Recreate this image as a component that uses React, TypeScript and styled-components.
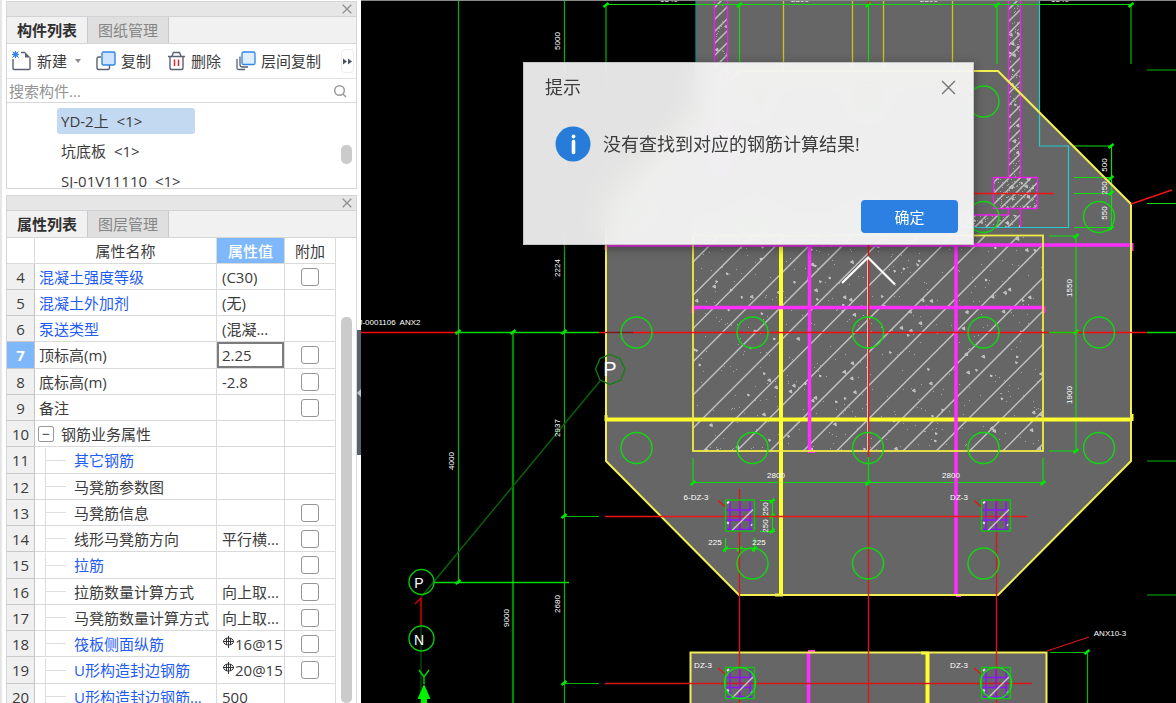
import React from "react";
import styled, { createGlobalStyle, css } from "styled-components";

const GlobalStyle = createGlobalStyle`
  *, *::before, *::after { box-sizing: border-box; }
  body {
    margin: 0;
    background: #fff;
    color: #3c3c3c;
    font: 15px/20px "Open Sans", "Noto Sans CJK SC", sans-serif;
  }
  button, input { font: inherit; color: inherit; }
  button { padding: 0; border: 0; background: none; cursor: pointer; }
`;

/* ---------- shell ---------- */

const Shell = styled.div`
  display: flex;
  height: 100vh;
  overflow: hidden;
`;

const Sidebar = styled.aside`
  flex: none;
  width: 357px;
  display: flex;
  flex-direction: column;
  gap: 6px;
  padding: 1px 0 0 4px;
  border-left: 2px solid #e6e6e6;
`;

const Panel = styled.section<{ $grow?: boolean }>`
  display: flex;
  flex-direction: column;
  border: 1px solid #d4d6d8;
  overflow: hidden;
  ${(p) => p.$grow && css`flex: 1; min-height: 0; border-bottom: 0;`}
`;

const PanelBar = styled.div`
  display: flex;
  flex: none;
  justify-content: flex-end;
  align-items: center;
  height: 14px;
  padding-right: 4px;
  background: #e6e6e6;
`;

const BarClose = styled.button`
  display: flex;
  color: #8f8f8f;
`;

const Tabs = styled.div`
  display: flex;
  flex: none;
  height: 28px;
  background: #f1f1f1;
  border-top: 1px solid #d0d3d6;
  border-bottom: 1px solid #d4d6d8;
`;

const Tab = styled.button<{ $active?: boolean }>`
  width: 81px;
  border-right: 1px solid #c6cace;
  background: ${(p) => (p.$active ? "#f1f1f1" : "#dfdfdf")};
  color: ${(p) => (p.$active ? "#303030" : "#868686")};
  font-weight: ${(p) => (p.$active ? 700 : 400)};
`;

/* ---------- component list ---------- */

const Toolbar = styled.div`
  display: flex;
  align-items: center;
  gap: 15px;
  height: 35px;
  padding: 0 2px 0 5px;
  border-bottom: 1px solid #e2e2e2;
`;

const ToolButton = styled.button`
  display: flex;
  align-items: center;
  gap: 5px;
  white-space: nowrap;
`;

const Caret = styled.span`
  margin-left: 3px;
  border: 3px solid transparent;
  border-top: 4px solid #8c8c8c;
  border-bottom: 0;
`;

const MoreButton = styled.button`
  display: flex;
  align-items: center;
  justify-content: center;
  width: 13px;
  height: 24px;
  margin-left: auto;
  border: 1px solid #ececec;
  border-radius: 4px;
`;

const SearchBox = styled.label`
  display: flex;
  align-items: center;
  height: 24px;
  padding: 0 9px 0 2px;
  border-bottom: 1px solid #d8d8d8;
  color: #9a9a9a;
`;

const SearchInput = styled.input`
  flex: 1;
  min-width: 0;
  height: 22px;
  padding: 0;
  border: 0;
  outline: 0;
  background: none;
  &::placeholder { color: #949494; }
`;

const ListArea = styled.div`
  display: flex;
  justify-content: space-between;
  height: 85px;
  overflow: hidden;
`;

const ItemList = styled.ul`
  display: flex;
  flex-direction: column;
  gap: 4px;
  margin: 0;
  padding: 5px 0 0 50px;
  list-style: none;
`;

const Item = styled.li<{ $selected?: boolean }>`
  min-width: 138px;
  height: 26px;
  padding: 0 4px;
  line-height: 26px;
  border-radius: 3px;
  background: ${(p) => (p.$selected ? "#c3d9f1" : "transparent")};
`;

const Count = styled.span`
  margin-left: 4px;
`;

const Rail = styled.div<{ $top: number }>`
  display: flex;
  flex-direction: column;
  width: 15px;
  padding: ${(p) => p.$top}px 4px 0 0;
`;

const Thumb = styled.div<{ $length?: number }>`
  flex: ${(p) => (p.$length ? `0 0 ${p.$length}px` : "1")};
  border-radius: 5px;
  background: #cbcbcb;
`;

/* ---------- property table ---------- */

const TableArea = styled.div`
  display: flex;
  justify-content: space-between;
  flex: 1;
  min-height: 0;
`;

const TableClip = styled.div`
  overflow: hidden;
`;

const Table = styled.table`
  width: 329px;
  table-layout: fixed;
  border-collapse: separate;
  border-spacing: 0;

  tbody tr { height: 26px; }
  tbody tr:nth-child(4n) { height: 27px; }
`;

const HeadCell = styled.th<{ $current?: boolean }>`
  height: 26px;
  padding: 0;
  font-weight: 400;
  border-right: 1px solid #dadada;
  border-bottom: 1px solid #dadada;
  ${(p) => p.$current && css`background: #7fb8fa; color: #fff; font-weight: 500;`}
`;

const IndexCell = styled.th<{ $current?: boolean }>`
  padding: 0;
  font-weight: 400;
  background: #f0f0f0;
  border-right: 1px solid #c4c4c4;
  border-bottom: 1px solid #c8c8c8;
  ${(p) => p.$current && css`background: #7fb8fa; color: #fff; font-weight: 700;`}
`;

const Cell = styled.td`
  padding: 0;
  border-right: 1px solid #dadada;
  border-bottom: 1px solid #dadada;
`;

const NameBox = styled.div<{ $link?: boolean }>`
  display: flex;
  align-items: center;
  height: 25px;
  padding-left: 4px;
  overflow: hidden;
  white-space: nowrap;
  color: ${(p) => (p.$link ? "#1f5cf5" : "inherit")};
`;

const Branch = styled.span`
  flex: none;
  width: 21px;
  height: 26px;
  margin: 0 8px 0 6px;
  border-left: 1px solid #dedede;
  background: linear-gradient(#dedede, #dedede) 0 50% / 100% 1px no-repeat;
`;

const Fold = styled.button`
  flex: none;
  width: 16px;
  height: 16px;
  margin: 0 7px 0 -1px;
  border: 1px solid #9a9a9a;
  border-radius: 2px;
  font-size: 14px;
  line-height: 12px;
`;

const ValueBox = styled.div`
  display: flex;
  align-items: center;
  height: 25px;
  padding-left: 5px;
  overflow: hidden;
  white-space: nowrap;
`;

const ValueInput = styled.input`
  display: block;
  width: 100%;
  height: 26px;
  padding: 0 3px;
  border: 2px solid #7c7c7c;
  outline: 0;
`;

const Check = styled.input`
  appearance: none;
  display: block;
  width: 18px;
  height: 18px;
  margin: 0 auto;
  border: 1px solid #959595;
  border-radius: 3px;
  background: #fff;
`;

/* ---------- splitter and drawing area ---------- */

const Splitter = styled.div`
  flex: none;
  width: 4px;
  padding-top: 330px;
`;

const SplitHandle = styled.button`
  display: flex;
  align-items: center;
  width: 4px;
  height: 125px;
  background: #56616d;
`;

const Viewport = styled.main`
  position: relative;
  flex: 1;
  min-width: 0;
  background: #000;
`;

const Drawing = styled.svg`
  display: block;
  width: 100%;
  height: 100%;
  text {
    font-family: "Liberation Sans", sans-serif;
    font-size: 8px;
    fill: #fff;
    text-anchor: middle;
  }
`;

const Dialog = styled.div`
  position: absolute;
  top: 62px;
  left: 162px;
  width: 451px;
  height: 183px;
  display: flex;
  flex-direction: column;
  justify-content: space-between;
  padding: 12px 15px 11px 21px;
  border: 1px solid #c6c6c6;
  background: rgba(255, 255, 255, 0.89);
  backdrop-filter: blur(14px);
  box-shadow: 0 3px 10px rgba(0, 0, 0, 0.4);
  font-size: 18px;
  line-height: 24px;
`;

const DialogHead = styled.header`
  display: flex;
  justify-content: space-between;
  align-items: center;
`;

const DialogTitle = styled.h2`
  margin: 0;
  font-size: 18px;
  font-weight: 400;
`;

const DialogClose = styled.button`
  display: flex;
  padding: 0 2px;
`;

const DialogBody = styled.div`
  display: flex;
  align-items: center;
  gap: 12px;
  padding-left: 10px;
  margin-bottom: 12px;
`;

const Message = styled.p`
  margin: 0;
`;

const DialogFoot = styled.footer`
  display: flex;
  justify-content: flex-end;
`;

const Confirm = styled.button`
  width: 97px;
  height: 33px;
  border-radius: 4px;
  background: #2b80e2;
  color: #fff;
  font-size: 15px;
`;

/* ---------- icons ---------- */

const CrossIcon = ({ size, color }: { size: number; color: string }) => (
  <svg width={size} height={size} viewBox="0 0 14 14" stroke={color} strokeWidth={size > 12 ? 1.3 : 1.8} fill="none">
    <path d="M1 1 13 13M13 1 1 13" />
  </svg>
);

const NewIcon = () => (
  <svg width="20" height="20" viewBox="0 0 20 20" fill="none">
    <path d="M1 8v9.500q0 1 1 1h15q1 0 1-1V6.500M9 1.500h4" stroke="#5a6170" strokeWidth="1.400" />
    <path d="M13 1v5.500h5.500z" fill="#5a6170" />
    <rect x="1" y="1" width="5" height="5" fill="#7db4f5" />
    <path d="M3.500 0v7M0 3.500h7M.5 .5l6 6M6.500 .5l-6 6" stroke="#2f86ea" strokeWidth="1" />
  </svg>
);

const CopyIcon = () => (
  <svg width="20" height="20" viewBox="0 0 20 20" fill="none" strokeWidth="1.400">
    <path d="M5 6H2.500Q1 6 1 7.500V17q0 1.500 1.500 1.500H12q1.500 0 1.500-1.500v-3" stroke="#5a6170" />
    <rect x="6" y="1" width="13" height="13" rx="1.500" fill="#cfe3fc" stroke="#2f86ea" />
  </svg>
);

const DeleteIcon = () => (
  <svg width="20" height="20" viewBox="0 0 20 20" fill="none" strokeWidth="1.400">
    <path d="M2 5.500h17M4 5.500v11.500q0 1.500 1.500 1.500h10Q17 18.500 17 17V5.500M6 5l1.500-3.500h6L15 5" stroke="#5a6170" />
    <path d="M8.500 8.500v6.500M12.500 8.500v6.500" stroke="#e0222c" strokeWidth="1.500" />
  </svg>
);

const LayerCopyIcon = () => (
  <svg width="20" height="20" viewBox="0 0 20 20" fill="none" strokeWidth="1.300">
    <path d="M1 8v9q0 1.500 1.500 1.500H9M4 5.500v8q0 2.500 2.500 2.500H12" stroke="#5a6170" />
    <rect x="6" y="1" width="13" height="12.500" rx="1.500" fill="#dfedfd" stroke="#2f86ea" />
  </svg>
);

const SearchIcon = () => (
  <svg width="14" height="14" viewBox="0 0 14 14" fill="none" stroke="#9a9a9a" strokeWidth="1.500">
    <circle cx="6.500" cy="6.500" r="4.800" />
    <path d="m10 10 3 3" />
  </svg>
);

const RebarIcon = () => (
  <svg width="13" height="16" viewBox="0 0 13 16" fill="none" stroke="#333" strokeWidth="1">
    <ellipse cx="6.500" cy="5.500" rx="5" ry="3.500" />
    <path d="M6.500 0v12M1 5.500h11M4.500 2v7M8.500 2v7" />
  </svg>
);

const InfoIcon = () => (
  <svg width="36" height="36" viewBox="0 0 36 36">
    <circle cx="18" cy="18" r="17.500" fill="#267cd8" />
    <circle cx="18.500" cy="10.500" r="1.900" fill="#fff" />
    <path d="M18.500 15.500v11" stroke="#fff" strokeWidth="3.600" strokeLinecap="round" />
  </svg>
);

/* ---------- property data ---------- */

interface Property {
  no: number;
  name: string;
  value?: string;
  link?: boolean;
  check?: boolean;
  child?: boolean;
  group?: boolean;
  rebar?: boolean;
  current?: boolean;
}

const properties: Property[] = [
  { no: 4, name: "混凝土强度等级", value: "(C30)", link: true, check: true },
  { no: 5, name: "混凝土外加剂", value: "(无)", link: true },
  { no: 6, name: "泵送类型", value: "(混凝...", link: true },
  { no: 7, name: "顶标高(m)", value: "2.25", check: true, current: true },
  { no: 8, name: "底标高(m)", value: "-2.8", check: true },
  { no: 9, name: "备注", check: true },
  { no: 10, name: "钢筋业务属性", group: true },
  { no: 11, name: "其它钢筋", link: true, child: true },
  { no: 12, name: "马凳筋参数图", child: true },
  { no: 13, name: "马凳筋信息", child: true, check: true },
  { no: 14, name: "线形马凳筋方向", value: "平行横...", child: true, check: true },
  { no: 15, name: "拉筋", link: true, child: true, check: true },
  { no: 16, name: "拉筋数量计算方式", value: "向上取...", child: true, check: true },
  { no: 17, name: "马凳筋数量计算方式", value: "向上取...", child: true, check: true },
  { no: 18, name: "筏板侧面纵筋", value: "16@15", link: true, child: true, check: true, rebar: true },
  { no: 19, name: "U形构造封边钢筋", value: "20@15", link: true, child: true, check: true, rebar: true },
  { no: 20, name: "U形构造封边钢筋...", value: "500", link: true, child: true },
];

/* ---------- drawing ---------- */

type Seg = [number, number, number, number];

const Lines = ({ segs, color, w = 1 }: { segs: Seg[]; color: string; w?: number }) => (
  <path d={segs.map(([a, b, c, d]) => `M${a} ${b}L${c} ${d}`).join("")} stroke={color} strokeWidth={w} fill="none" />
);

function scatter(seed: number, count: number, x: number, y: number, w: number, h: number) {
  let s = seed;
  const next = () => {
    s = (s * 16807) % 2147483647;
    return s / 2147483647;
  };
  return Array.from({ length: count }, () => [x + next() * w, y + next() * h, next()] as const);
}

interface ConcreteProps {
  id: string;
  x: number;
  y: number;
  w: number;
  h: number;
  step: number;
  start: number;
  dots: number;
  stones: number;
}

const Concrete = ({ id, x, y, w, h, step, start, dots, stones }: ConcreteProps) => {
  const segs: Seg[] = [];
  for (let c = start; c < x + y + w + h; c += step) segs.push([c - y - h, y + h, c - y, y]);
  return (
    <g>
      <clipPath id={id}>
        <rect x={x} y={y} width={w} height={h} />
      </clipPath>
      <g clipPath={`url(#${id})`}>
        <Lines segs={segs} color="#c0c0c0" w={1.5} />
        {scatter(x * 7 + 11, dots, x, y, w, h).map(([a, b], i) => (
          <rect key={i} x={Math.round(a)} y={Math.round(b)} width="1" height="1" fill="#a8a8a8" />
        ))}
        {scatter(x * 3 + 77, stones, x, y, w, h).map(([a, b, r], i) => (
          <path
            key={i}
            d={r > 0.5 ? `M${a} ${b}l2.500 -1.500l.5 3z` : `M${a} ${b}l2 1l-1.500 1z`}
            fill="#aaa"
            stroke="#cacaca"
            strokeWidth="1"
            strokeLinejoin="round"
          />
        ))}
      </g>
    </g>
  );
};

const Note = ({ x, y, t, turn }: { x: number; y: number; t: string; turn?: boolean }) => (
  <text transform={turn ? `translate(${x + 3} ${y}) rotate(-90)` : `translate(${x} ${y + 3})`}>{t}</text>
);

const Column = ({ x, y, ring }: { x: number; y: number; ring?: boolean }) => (
  <g transform={`translate(${x} ${y})`} fill="none">
    <path d="M-9 -14V15M1 -14V15M11 -14V15M-13 -5.500H13M-13 4.500H13M-12 14H13" stroke="#8a14ff" strokeWidth="1.600" />
    <path d="M-7 15 14 -6" stroke="#c8c8c8" strokeWidth="1.400" />
    <path d="M-12 -12l2 -2M-12 7l2 1M12 9l1 1" stroke="#ddd" strokeWidth="2" />
    <rect x="-13.500" y="-15.500" width="29" height="31" stroke="#12c412" strokeWidth="1.400" />
    {ring && <circle cx="1" r="15.500" stroke="#12e012" strokeWidth="1.400" />}
    <path d="M-21 -15l7 6" stroke="#e01818" strokeWidth="1.400" />
  </g>
);

const piles: [number, number][] = [
  [752.5, 101.5], [868, 101.5], [983.5, 101.5],
  [636.5, 217], [752.5, 217], [868, 217], [983.5, 217], [1099, 217],
  [636.5, 332.5], [752.5, 332.5], [868, 332.5], [983.5, 332.5], [1099, 332.5],
  [636.5, 448], [752.5, 448], [868, 448], [983.5, 448], [1099, 448],
  [752.5, 563.5], [868, 563.5], [983.5, 563.5],
];

const ticks: [number, number][] = [
  [606, 5], [739.5, 5], [868, 5], [997, 5], [1131, 5],
  [458, 332], [513, 332], [564, 332], [458, 582], [564, 516], [564, 683],
  [693, 483], [868, 483], [1043, 483],
  [1111, 146], [1111, 178], [1111, 193], [1111, 228],
  [1076, 236], [1076, 332], [1076, 451],
  [772, 501], [772, 516], [772, 531], [725.5, 549], [739.5, 549], [754.5, 549],
  [1087, 652],
];

const slab = "739,71 998,71 1131,204 1131,461 998,595 739,595 606,461 606,204";

const FoundationPlan = () => (
  <Drawing viewBox="361 0 815 703" preserveAspectRatio="xMidYMid slice" role="img" aria-label="筏板平面图">
    <polygon points={slab} fill="#666" />
    <path d="M696 0H1040V120H696z" fill="#666" />
    <rect x="690" y="652" width="357" height="51" fill="#666" />

    <Concrete id="pit" x={693} y={236} w={350} h={215} step={33.25} start={955} dots={420} stones={120} />
    <Concrete id="wallL" x={715} y={0} w={12} h={180} step={12} start={722} dots={70} stones={8} />
    <Concrete id="wallR" x={1009} y={0} w={11} h={177} step={12} start={1018} dots={110} stones={12} />
    <Concrete id="post" x={993} y={178} w={44} h={31} step={11} start={1176} dots={110} stones={10} />
    <Concrete id="foot" x={960} y={215} w={60} h={12} step={11} start={1180} dots={50} stones={8} />

    <Lines color="#ccc41c" w={1.3} segs={[[783.5, 0, 783.5, 71], [852.5, 0, 852.5, 71], [883.5, 0, 883.5, 71], [952.5, 0, 952.5, 71]]} />
    <Lines color="#f01cf0" w={1.4} segs={[
      [714.5, 0, 714.5, 200], [727.5, 0, 727.5, 200], [1008.5, 0, 1008.5, 177], [1020.5, 0, 1020.5, 177],
      [1020.5, 209, 1020.5, 227], [940, 215, 1008.5, 215], [1008.5, 209, 1008.5, 215],
    ]} />
    <rect x="993.500" y="177.500" width="44" height="31" fill="none" stroke="#f01cf0" strokeWidth="1.400" />
    <path d="M1039.500 0V146H1068.500V227.500H700" fill="none" stroke="#22ccd0" strokeWidth="1.200" />
    <Lines color="#0a8f92" w={1.3} segs={[[696, 0, 696, 227]]} />

    {/* dimension chains */}
    <Lines color="#00b800" w={1.2} segs={[
      [458.5, 0, 458.5, 584], [564.5, 0, 564.5, 703], [606, 4, 606, 200],
      [1131, 4, 1131, 64], [1147, 70, 1176, 70], [1147, 461, 1176, 461], [1147, 595, 1176, 595],
      [1087.5, 650, 1087.5, 703], [1050, 652.5, 1088, 652.5],
      [564, 516.5, 599, 516.5], [564, 683.5, 599, 683.5],
    ]} />
    <Lines color="#008a00" w={2.2} segs={[[513, 332, 513, 703]]} />
    <Lines color="#10dc10" w={1.2} segs={[
      [605, 4.5, 1131, 4.5], [739.5, 4, 739.5, 64], [868.5, 4, 868.5, 64], [997, 4, 997, 64],
      [1147, 203.5, 1176, 203.5],
      [1111.5, 145, 1111.5, 230], [1074, 146, 1112, 146], [1074, 177.5, 1112, 177.5], [1074, 193.5, 1112, 193.5], [1074, 227.5, 1112, 227.5],
      [1076, 235, 1076, 451], [1049, 236, 1078, 236], [1049, 451, 1078, 451],
      [692, 482.5, 1043, 482.5], [693, 458, 693, 484], [1043, 458, 1043, 484],
      [772.5, 500, 772.5, 533], [760, 500.5, 775, 500.5], [760, 516, 775, 516], [760, 531.5, 775, 531.5],
      [724, 548.5, 755, 548.5], [725.5, 538, 725.5, 552], [739.5, 538, 739.5, 552], [754.5, 538, 754.5, 552],
    ]} />
    <path d={ticks.map(([x, y]) => `M${x - 2.5} ${y + 2}L${x + 2.5} ${y - 2}`).join("")} stroke="#00e800" strokeWidth="2.500" />

    {/* reinforcement bands */}
    <Lines color="#ffff2e" w={4} segs={[[781, 245, 781, 596], [606, 419.5, 1131, 419.5], [927.5, 652, 927.5, 703]]} />
    <path d="M606 415V421M1132 414V421M775 595H783M921 653H929" stroke="#ffff2e" strokeWidth="3" fill="none" />
    <Lines color="#ff2eff" w={3.5} segs={[
      [809.5, 245, 809.5, 451], [956, 235, 956, 595], [606, 245, 1131, 245], [693, 307.5, 1043, 307.5], [808.5, 652, 808.5, 703],
    ]} />
    <path d="M1132 243V251M1044 306V313M693 306V313M808 451.500H815M956 595.500H961M808 651.500H815M606 244V250" stroke="#ff2edc" strokeWidth="3" fill="none" />

    <polygon points={slab} fill="none" stroke="#f4ef50" strokeWidth="2" />
    <rect x="693" y="235.500" width="350" height="215.500" fill="none" stroke="#f1ec44" strokeWidth="1.800" />
    <path d="M690.500 703V652.500H1046.500V703" fill="none" stroke="#f4ef50" strokeWidth="2" />

    {/* axes */}
    <Lines color="#fb0808" w={1.4} segs={[
      [361, 332.5, 458, 332.5], [599, 332.5, 606, 332.5], [632, 332.5, 1147, 332.5],
    ]} />
    <Lines color="#8c1212" w={1.4} segs={[[606, 332.5, 633, 332.5]]} />
    <Lines color="#e8e8e8" w={1} segs={[[867.5, 257, 867.5, 451]]} />
    <Lines color="#f01414" w={1.4} segs={[
      [868.5, 0, 868.5, 4], [868.5, 245, 868.5, 457], [605, 516.5, 1027, 516.5], [950, 193.5, 1054, 193.5], [1131, 204, 1172, 190],
    ]} />
    <Lines color="#d81616" w={1.3} segs={[
      [868.5, 486, 868.5, 703], [739.5, 489, 739.5, 703], [996.5, 500, 996.5, 703], [605, 683.5, 1032, 683.5], [1047, 651, 1089, 637],
    ]} />
    <Lines color="#00dc00" w={1.3} segs={[
      [455, 332.5, 599, 332.5], [1049, 332.5, 1078, 332.5], [1147, 332.5, 1176, 332.5], [868.5, 457, 868.5, 484], [434, 582.5, 569, 582.5],
    ]} />
    <path d="M842 283 868 257.500 895 284.500" stroke="#fff" strokeWidth="2.200" fill="none" />

    {piles.map(([x, y]) => (
      <circle key={`${x}-${y}`} cx={x} cy={y} r="15.500" fill="none" stroke="#12d812" strokeWidth="1.400" />
    ))}

    <Column x={739} y={515.5} />
    <Column x={995} y={515.5} />
    <Column x={739} y={683} ring />
    <Column x={995} y={683} ring />

    {/* axis bubbles and origin marker */}
    <path d="M422 596 600 381" stroke="#0a640a" strokeWidth="1.400" />
    <polygon points="610,354.500 620,358.500 625,369 621,380 610,384.500 600,380 595.500,369 600,358.500" fill="none" stroke="#108010" strokeWidth="1.300" />
    <Lines color="#064e06" w={1.4} segs={[[421, 625, 421, 703]]} />
    <circle cx="421.500" cy="582" r="12.500" fill="none" stroke="#08c808" strokeWidth="1.400" />
    <circle cx="421.500" cy="638.500" r="12.500" fill="none" stroke="#08c808" strokeWidth="1.400" />
    <path d="M421 625V598L415 604" stroke="#d40000" strokeWidth="1.500" fill="none" />
    <path d="M419 670 424 677 429 670M424 677V684" stroke="#00d800" strokeWidth="1.400" fill="none" />
    <path d="M424 684 417.500 699H421V703H427V699H430.500z" fill="#00f400" />
    <text x="419" y="588" style={{ fontSize: 14 }}>P</text>
    <text x="419" y="645" style={{ fontSize: 14 }}>N</text>
    <text x="610" y="376" style={{ fontSize: 20 }}>P</text>

    {/* notes */}
    <Note x={557} y={41} t="5000" turn />
    <Note x={557} y={268} t="2224" turn />
    <Note x={557} y={428} t="2937" turn />
    <Note x={557} y={604} t="2680" turn />
    <Note x={451} y={461} t="4000" turn />
    <Note x={506} y={618} t="9000" turn />
    <Note x={1104} y={165} t="500" turn />
    <Note x={1104} y={188} t="250" turn />
    <Note x={1104} y={213} t="550" turn />
    <Note x={1069} y={288} t="1550" turn />
    <Note x={1069} y={395} t="1900" turn />
    <Note x={765} y={509} t="250" turn />
    <Note x={765} y={526} t="250" turn />
    <Note x={776} y={475} t="2800" />
    <Note x={951} y={475} t="2800" />
    <Note x={715} y={542} t="225" />
    <Note x={759} y={542} t="225" />
    <Note x={669} y={-1} t="1340" />
    <Note x={800} y={-1} t="2800" />
    <Note x={929} y={-1} t="2800" />
    <Note x={1060} y={-1} t="1340" />
    <Note x={696} y={497} t="6-DZ-3" />
    <Note x={959} y={497} t="DZ-3" />
    <Note x={703} y={665} t="DZ-3" />
    <Note x={959} y={665} t="DZ-3" />
    <Note x={377} y={322} t="J-0001106" />
    <Note x={410} y={322} t="ANX2" />
    <Note x={1110} y={633} t="ANX10-3" />
    <Lines color="#8a8a8a" segs={[[361, 0.5, 1176, 0.5]]} />
  </Drawing>
);

/* ---------- page ---------- */

const ComponentPanel = () => (
  <Panel>
    <PanelBar>
      <BarClose aria-label="关闭构件列表"><CrossIcon size={10} color="#8f8f8f" /></BarClose>
    </PanelBar>
    <Tabs>
      <Tab $active>构件列表</Tab>
      <Tab>图纸管理</Tab>
    </Tabs>
    <Toolbar>
      <ToolButton><NewIcon />新建<Caret /></ToolButton>
      <ToolButton><CopyIcon />复制</ToolButton>
      <ToolButton><DeleteIcon />删除</ToolButton>
      <ToolButton><LayerCopyIcon />层间复制</ToolButton>
      <MoreButton aria-label="更多">
        <svg width="9" height="7" viewBox="0 0 9 7" fill="#4a5162"><path d="M0 .5 4 3.500 0 6.500zM5 .5 9 3.500 5 6.500z" /></svg>
      </MoreButton>
    </Toolbar>
    <SearchBox>
      <SearchInput placeholder="搜索构件..." aria-label="搜索构件" />
      <SearchIcon />
    </SearchBox>
    <ListArea>
      <ItemList>
        <Item $selected>YD-2上 <Count>&lt;1&gt;</Count></Item>
        <Item>坑底板 <Count>&lt;1&gt;</Count></Item>
        <Item>SJ-01V11110 <Count>&lt;1&gt;</Count></Item>
      </ItemList>
      <Rail $top={42}><Thumb $length={19} /></Rail>
    </ListArea>
  </Panel>
);

const PropertyRow = ({ p }: { p: Property }) => (
  <tr>
    <IndexCell scope="row" $current={p.current}>{p.no}</IndexCell>
    <Cell>
      <NameBox $link={p.link}>
        {p.group && <Fold aria-label="折叠">−</Fold>}
        {p.child && <Branch />}
        {p.name}
      </NameBox>
    </Cell>
    <Cell>
      {p.current ? (
        <ValueInput defaultValue={p.value} aria-label={p.name} />
      ) : (
        <ValueBox>{p.rebar && <RebarIcon />}{p.value}</ValueBox>
      )}
    </Cell>
    <Cell>{p.check && <Check type="checkbox" aria-label={`附加 ${p.name}`} />}</Cell>
  </tr>
);

const PropertyPanel = () => (
  <Panel $grow>
    <PanelBar>
      <BarClose aria-label="关闭属性列表"><CrossIcon size={10} color="#8f8f8f" /></BarClose>
    </PanelBar>
    <Tabs>
      <Tab $active>属性列表</Tab>
      <Tab>图层管理</Tab>
    </Tabs>
    <TableArea>
      <TableClip>
        <Table>
          <colgroup>
            <col width="28" />
            <col width="182" />
            <col width="68" />
            <col width="51" />
          </colgroup>
          <thead>
            <tr>
              <HeadCell aria-label="序号" />
              <HeadCell scope="col">属性名称</HeadCell>
              <HeadCell scope="col" $current>属性值</HeadCell>
              <HeadCell scope="col">附加</HeadCell>
            </tr>
          </thead>
          <tbody>
            {properties.map((p) => <PropertyRow key={p.no} p={p} />)}
          </tbody>
        </Table>
      </TableClip>
      <Rail $top={79}><Thumb /></Rail>
    </TableArea>
  </Panel>
);

export default function App() {
  return (
    <>
      <GlobalStyle />
      <Shell>
        <Sidebar>
          <ComponentPanel />
          <PropertyPanel />
        </Sidebar>
        <Splitter>
          <SplitHandle aria-label="收起侧栏">
            <svg width="4" height="8" viewBox="0 0 4 8"><path d="M4 0v8L0 4z" fill="#c0c6cc" /></svg>
          </SplitHandle>
        </Splitter>
        <Viewport>
          <FoundationPlan />
          <Dialog role="dialog" aria-labelledby="tip-title">
            <DialogHead>
              <DialogTitle id="tip-title">提示</DialogTitle>
              <DialogClose aria-label="关闭"><CrossIcon size={15} color="#777" /></DialogClose>
            </DialogHead>
            <DialogBody>
              <InfoIcon />
              <Message>没有查找到对应的钢筋计算结果!</Message>
            </DialogBody>
            <DialogFoot>
              <Confirm>确定</Confirm>
            </DialogFoot>
          </Dialog>
        </Viewport>
      </Shell>
    </>
  );
}
